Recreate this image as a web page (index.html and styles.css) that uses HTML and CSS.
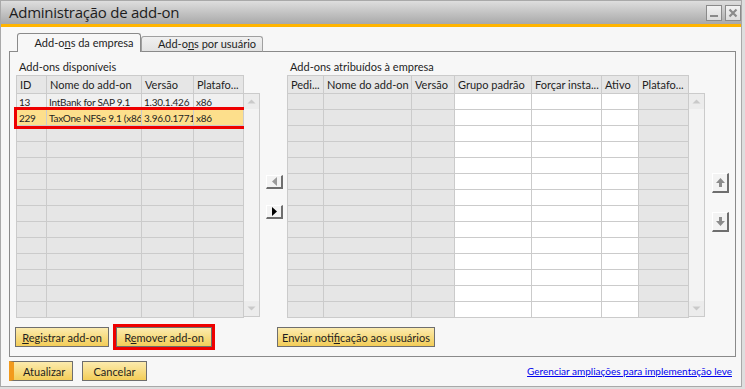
FILE: index.html
```html
<!DOCTYPE html>
<html lang="pt-BR">
<head>
    <meta charset="UTF-8">
    <title>Administração de add-on</title>
    <link rel="stylesheet" href="styles.css">
</head>
<body>
    <div class="window">
        <div class="titlebar">
            <span class="title">Administração de add-on</span>
            <div class="title-buttons">
                <span class="tb-btn">
                    <svg width="14" height="14" viewBox="0 0 14 14"><rect x="3" y="9" width="8" height="2" fill="#8a8a8a"/></svg>
                </span>
                <span class="tb-btn">
                    <svg width="14" height="14" viewBox="0 0 14 14"><path d="M3.5 3.5 L10.5 10.5 M10.5 3.5 L3.5 10.5" stroke="#8a8a8a" stroke-width="2.2"/></svg>
                </span>
            </div>
        </div>

        <div class="content">
            <div class="tabs">
                <div class="tab active">Add-o<u>n</u>s da empresa</div>
                <div class="tab">Add-o<u>n</u>s por usuário</div>
            </div>

            <div class="panel">
                <div class="panel-main">
                    <div class="left-col">
                        <div class="group-label">Add-ons disponíveis</div>
                        <div class="grid-wrap">
                            <table class="grid grid-left">
                                <colgroup>
                                    <col style="width: 30px">
                                    <col style="width: 95px">
                                    <col style="width: 52px">
                                    <col style="width: 50px">
                                </colgroup>
                                <thead>
                                    <tr><th>ID</th><th>Nome do add-on</th><th>Versão</th><th>Platafo...</th></tr>
                                </thead>
                                <tbody>
                                    <tr class="data"><td>13</td><td>IntBank for SAP 9.1</td><td>1.30.1.426</td><td>x86</td></tr>
                                    <tr class="selected"><td>229</td><td>TaxOne NFSe 9.1 (x86)</td><td>3.96.0.1771</td><td>x86</td></tr>
                                    <tr><td></td><td></td><td></td><td></td></tr>
                                    <tr><td></td><td></td><td></td><td></td></tr>
                                    <tr><td></td><td></td><td></td><td></td></tr>
                                    <tr><td></td><td></td><td></td><td></td></tr>
                                    <tr><td></td><td></td><td></td><td></td></tr>
                                    <tr><td></td><td></td><td></td><td></td></tr>
                                    <tr><td></td><td></td><td></td><td></td></tr>
                                    <tr><td></td><td></td><td></td><td></td></tr>
                                    <tr><td></td><td></td><td></td><td></td></tr>
                                    <tr><td></td><td></td><td></td><td></td></tr>
                                    <tr><td></td><td></td><td></td><td></td></tr>
                                    <tr><td></td><td></td><td></td><td></td></tr>
                                </tbody>
                            </table>
                            <div class="vscroll">
                                <span class="sc-arrow"><svg width="15" height="15" viewBox="0 0 15 15"><path d="M3.5 9.5 L7.5 5.5 L11.5 9.5 Z" fill="#c9c9c9"/></svg></span>
                                <span class="sc-arrow"><svg width="15" height="15" viewBox="0 0 15 15"><path d="M3.5 5.5 L7.5 9.5 L11.5 5.5 Z" fill="#c9c9c9"/></svg></span>
                            </div>
                        </div>
                    </div>

                    <div class="move-col">
                        <span class="small-btn">
                            <svg width="13" height="11" viewBox="0 0 13 11"><path d="M4 5.5 L9 1 L9 10 Z" fill="#9a9a9a"/></svg>
                        </span>
                        <span class="small-btn">
                            <svg width="13" height="11" viewBox="0 0 13 11"><path d="M9 5.5 L4 1 L4 10 Z" fill="#000"/></svg>
                        </span>
                    </div>

                    <div class="right-col">
                        <div class="group-label">Add-ons atribuídos à empresa</div>
                        <div class="grid-wrap">
                            <table class="grid grid-right">
                                <colgroup>
                                    <col style="width: 36px">
                                    <col style="width: 88px">
                                    <col style="width: 43px">
                                    <col style="width: 77px">
                                    <col style="width: 70px">
                                    <col style="width: 37px">
                                    <col style="width: 50px">
                                </colgroup>
                                <thead>
                                    <tr><th>Pedi...</th><th>Nome do add-on</th><th>Versão</th><th>Grupo padrão</th><th>Forçar insta...</th><th>Ativo</th><th>Platafo...</th></tr>
                                </thead>
                                <tbody>
                                    <tr><td></td><td></td><td></td><td class="w"></td><td class="w"></td><td class="w"></td><td></td></tr>
                                    <tr><td></td><td></td><td></td><td class="w"></td><td class="w"></td><td class="w"></td><td></td></tr>
                                    <tr><td></td><td></td><td></td><td class="w"></td><td class="w"></td><td class="w"></td><td></td></tr>
                                    <tr><td></td><td></td><td></td><td class="w"></td><td class="w"></td><td class="w"></td><td></td></tr>
                                    <tr><td></td><td></td><td></td><td class="w"></td><td class="w"></td><td class="w"></td><td></td></tr>
                                    <tr><td></td><td></td><td></td><td class="w"></td><td class="w"></td><td class="w"></td><td></td></tr>
                                    <tr><td></td><td></td><td></td><td class="w"></td><td class="w"></td><td class="w"></td><td></td></tr>
                                    <tr><td></td><td></td><td></td><td class="w"></td><td class="w"></td><td class="w"></td><td></td></tr>
                                    <tr><td></td><td></td><td></td><td class="w"></td><td class="w"></td><td class="w"></td><td></td></tr>
                                    <tr><td></td><td></td><td></td><td class="w"></td><td class="w"></td><td class="w"></td><td></td></tr>
                                    <tr><td></td><td></td><td></td><td class="w"></td><td class="w"></td><td class="w"></td><td></td></tr>
                                    <tr><td></td><td></td><td></td><td class="w"></td><td class="w"></td><td class="w"></td><td></td></tr>
                                    <tr><td></td><td></td><td></td><td class="w"></td><td class="w"></td><td class="w"></td><td></td></tr>
                                    <tr><td></td><td></td><td></td><td class="w"></td><td class="w"></td><td class="w"></td><td></td></tr>
                                </tbody>
                            </table>
                            <div class="vscroll">
                                <span class="sc-arrow"><svg width="15" height="15" viewBox="0 0 15 15"><path d="M3.5 9.5 L7.5 5.5 L11.5 9.5 Z" fill="#c9c9c9"/></svg></span>
                                <span class="sc-arrow"><svg width="15" height="15" viewBox="0 0 15 15"><path d="M3.5 5.5 L7.5 9.5 L11.5 5.5 Z" fill="#c9c9c9"/></svg></span>
                            </div>
                        </div>
                    </div>

                    <div class="order-col">
                        <span class="small-btn tall">
                            <svg width="13" height="13" viewBox="0 0 13 13"><path d="M6.5 2 L11 7 L8 7 L8 11 L5 11 L5 7 L2 7 Z" fill="#8c8c8c"/></svg>
                        </span>
                        <span class="small-btn tall">
                            <svg width="13" height="13" viewBox="0 0 13 13"><path d="M6.5 11 L11 6 L8 6 L8 2 L5 2 L5 6 L2 6 Z" fill="#8c8c8c"/></svg>
                        </span>
                    </div>
                </div>

                <div class="panel-buttons">
                    <div class="left-buttons">
                        <button class="btn btn-reg"><u>R</u>egistrar add-on</button>
                        <button class="btn btn-rem marked">R<u>e</u>mover add-on</button>
                    </div>
                    <button class="btn btn-notify">Enviar noti<u>f</u>icação aos usuários</button>
                </div>
            </div>

            <div class="footer">
                <button class="btn btn-ok">Atualizar</button>
                <button class="btn btn-cancel">Cancelar</button>
                <a class="link" href="#">Gerenciar ampliações para implementação leve</a>
            </div>
        </div>
    </div>
</body>
</html>
```

FILE: styles.css
```css
body {
    margin: 0;
    padding: 0;
    background: #dedede;
    font-family: Lato, "Open Sans", Arial, sans-serif;
    font-size: 11px;
    color: #1e1e1e;
}
.window {
    width: 742px;
    height: 387px;
    box-sizing: border-box;
    border: 1px solid #a9a9a9;
    background: #f7f7f7;
    display: flex;
    flex-direction: column;
}
.titlebar {
    height: 23px;
    border-bottom: 3px solid #ffb400;
    background: linear-gradient(to bottom, #dedede, #a9a9a9);
    display: flex;
    align-items: center;
    justify-content: space-between;
    padding: 0 0 0 8px;
}
.title {
    font-family: "Open Sans", Arial, sans-serif;
    font-size: 15px;
    letter-spacing: -0.25px;
    color: #1c1c1c;
    line-height: 23px;
}
.title-buttons {
    display: flex;
    gap: 3px;
    align-self: flex-start;
    margin-top: 4px;
}
.tb-btn {
    width: 14px;
    height: 14px;
    border: 1px solid #8a8a8a;
    background: linear-gradient(to bottom, #f2f2f2, #dcdcdc);
    display: flex;
}
.content {
    flex: 1;
    padding: 6px 5px 0 8px;
    display: flex;
    flex-direction: column;
}
.tabs {
    display: flex;
    align-items: flex-end;
    height: 19px;
    padding-left: 8px;
    margin-bottom: -1px;
    position: relative;
    z-index: 1;
}
.tab {
    box-sizing: border-box;
    height: 16px;
    width: 122px;
    padding-left: 10px;
    border: 1px solid #a0a0a0;
    border-bottom: 1px solid #8a8a8a;
    border-radius: 3px 3px 0 0;
    background: linear-gradient(to bottom, #f0f0f0, #e2e2e2);
    text-align: center;
    line-height: 14px;
}
.tab.active {
    height: 19px;
    width: 124px;
    border-color: #8a8a8a;
    border-bottom: none;
    background: #f7f7f7;
    line-height: 18px;
}
.panel {
    height: 306px;
    box-sizing: border-box;
    border: 1px solid #8a8a8a;
    padding: 8px 0 0 6px;
    display: flex;
    flex-direction: column;
}
.panel-main {
    display: flex;
}
.group-label {
    height: 14px;
    line-height: 14px;
    padding-left: 3px;
    margin-bottom: 1px;
    white-space: nowrap;
}
.grid-wrap {
    display: flex;
    align-items: flex-start;
}
.grid {
    border-collapse: collapse;
    table-layout: fixed;
}
.grid-left {
    width: 227px;
}
.grid-right {
    width: 401px;
}
.grid th, .grid td {
    border: 1px solid #cbcbcb;
    padding: 0 0 0 3px;
    white-space: nowrap;
    overflow: hidden;
    font-weight: normal;
    text-align: left;
    background: #e6e6e6;
}
.grid th {
    height: 17px;
}
.grid td {
    height: 15px;
    padding-left: 2px;
    font-size: 10px;
    letter-spacing: -0.25px;
}
.grid td.w {
    background: #ffffff;
}
.grid tr.data td {
    background: #f0f0f0;
}
.grid tr.selected td {
    background: #fddf8c;
}
.grid tr.selected {
    outline: 3px solid #ee0000;
    outline-offset: 0;
}
.vscroll {
    width: 15px;
    height: 222px;
    margin-top: 18px;
    border: 1px solid #cbcbcb;
    border-left: none;
    background: #f3f3f3;
    display: flex;
    flex-direction: column;
    justify-content: space-between;
}
.sc-arrow {
    display: flex;
    width: 15px;
    height: 15px;
    background: #ececec;
}
.left-col {
    width: 245px;
}
.move-col {
    width: 21px;
    padding-left: 5px;
    padding-top: 115px;
    display: flex;
    flex-direction: column;
    gap: 16px;
}
.right-col {
    width: 418px;
}
.order-col {
    padding-left: 7px;
    padding-top: 113px;
    display: flex;
    flex-direction: column;
    gap: 19px;
}
.small-btn {
    box-sizing: border-box;
    width: 17px;
    height: 14px;
    background: #f3f3f3;
    border-top: 1px solid #ffffff;
    border-left: 1px solid #ffffff;
    border-right: 2px solid #6e6e6e;
    border-bottom: 2px solid #6e6e6e;
    display: flex;
    align-items: center;
    justify-content: center;
}
.small-btn.tall {
    height: 20px;
}
.panel-buttons {
    display: flex;
    align-items: center;
    margin-top: 9px;
}
.left-buttons {
    width: 261px;
    display: flex;
    gap: 7px;
}
.btn {
    box-sizing: border-box;
    height: 20px;
    padding: 0;
    border: 1px solid #6e6e6e;
    background: linear-gradient(to bottom, #fcebae, #f3cd58);
    font-family: Lato, "Open Sans", Arial, sans-serif;
    font-size: 11px;
    color: #1e1e1e;
    white-space: nowrap;
    cursor: pointer;
}
.btn-reg {
    width: 94px;
    margin-left: -1px;
}
.btn-rem {
    width: 96px;
}
.btn.marked {
    outline: 3px solid #ee0000;
}
.btn-notify {
    width: 158px;
}
.footer {
    display: flex;
    align-items: center;
    margin-top: 4px;
}
.btn-ok {
    width: 64px;
    border-left: 5px solid #f29a1c;
    text-align: left;
    padding-left: 9px;
}
.btn-cancel {
    width: 65px;
    margin-left: 9px;
}
.link {
    margin-left: auto;
    margin-right: 4px;
    font-size: 10px;
    color: #0000ee;
    text-decoration: underline;
}
```
